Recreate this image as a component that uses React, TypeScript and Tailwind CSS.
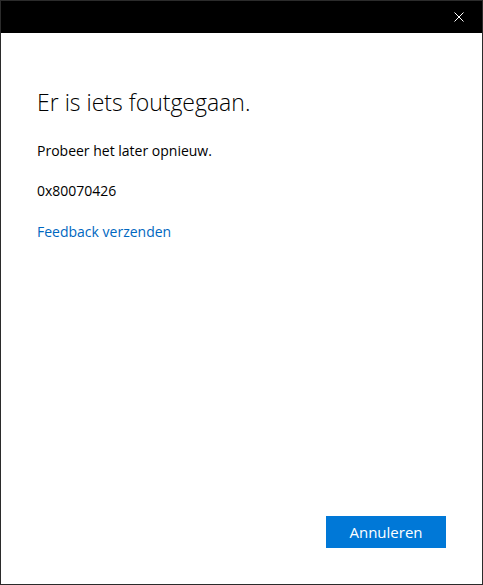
import React from 'react';

const App: React.FC = () => {
  return (
    <div className="w-[483px] h-[585px] border border-[#2b2b2b] bg-white flex flex-col font-['Segoe_UI','Open_Sans','Liberation_Sans',sans-serif]">
      <div className="h-[32px] bg-black flex items-center justify-end shrink-0">
        <button className="w-[46px] h-[32px] flex items-center justify-center" aria-label="Sluiten">
          <svg width="10" height="10" viewBox="0 0 10 10">
            <path d="M0.5 0.5 L9.5 9.5 M9.5 0.5 L0.5 9.5" stroke="white" strokeWidth="1" />
          </svg>
        </button>
      </div>

      <div className="flex-1 flex flex-col px-[36px] pt-[54px] text-black">
        <h1 className="text-[23px] leading-[30px] font-light">Er is iets foutgegaan.</h1>
        <p className="mt-[24px] text-[14px] leading-[20px]">Probeer het later opnieuw.</p>
        <p className="mt-[20px] text-[14px] leading-[20px]">0x80070426</p>
        <a href="#" className="mt-[21px] text-[14px] leading-[20px] text-[#0067c0] self-start">
          Feedback verzenden
        </a>
      </div>

      <div className="flex justify-end pr-[36px] pb-[36px]">
        <button className="w-[120px] h-[32px] bg-[#0078d7] text-white text-[15px]">Annuleren</button>
      </div>
    </div>
  );
};

export default App;
